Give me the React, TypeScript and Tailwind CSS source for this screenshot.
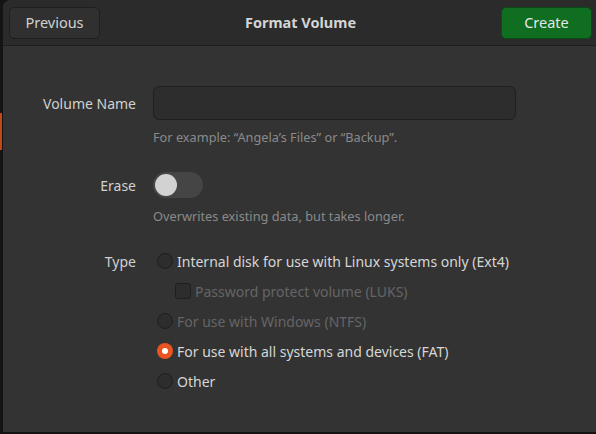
import { useState } from 'react';

const FONT = { fontFamily: '"Noto Sans", "Open Sans", sans-serif' };

type RadioProps = {
  label: string;
  checked?: boolean;
  disabled?: boolean;
  onSelect?: () => void;
};

function Radio({ label, checked, disabled, onSelect }: RadioProps) {
  return (
    <button
      type="button"
      onClick={onSelect}
      disabled={disabled}
      className="flex h-[30px] items-center gap-[4px] text-left"
    >
      {checked ? (
        <span className="flex h-[16px] w-[16px] items-center justify-center rounded-full bg-[#e95420]">
          <span className="h-[6px] w-[6px] rounded-full bg-white" />
        </span>
      ) : (
        <span className="h-[16px] w-[16px] rounded-full border border-[#1f1f1f] bg-[#2d2d2d]" />
      )}
      <span className={disabled ? 'text-[#656565]' : 'text-[#d6d6d6]'}>{label}</span>
    </button>
  );
}

export default function App() {
  const [volumeName, setVolumeName] = useState('');
  const [erase, setErase] = useState(false);
  const [type, setType] = useState('fat');

  return (
    <div className="flex h-[434px] w-[596px] bg-[#141414] text-[14px]" style={FONT}>
      {/* window edge of the app behind */}
      <div className="flex w-[3px] flex-col">
        <div className="h-[113px]" />
        <div className="h-[37px] w-[2px] bg-[#c4471a]" />
      </div>

      <div className="flex h-[432px] flex-1 flex-col overflow-hidden rounded-tl-[8px] bg-[#333333]">
        {/* Header bar */}
        <div className="flex h-[46px] items-center justify-between border-b border-[#1e1e1e] bg-[#2b2b2b] pl-[6px] pr-[4px]">
          <button className="h-[32px] w-[91px] rounded-[5px] border border-[#1f1f1f] bg-[#303030] text-[14.5px] text-[#d0d0d0]">
            Previous
          </button>
          <span className="text-[14.5px] font-bold text-[#d4d4d4]">Format Volume</span>
          <button className="h-[32px] w-[91px] rounded-[5px] border border-[#0a4a15] bg-[#0f6e1f] text-[14.5px] text-[#e6e6e6]">
            Create
          </button>
        </div>

        {/* Form */}
        <div className="grid grid-cols-[133px_1fr] gap-x-[17px] pt-[40px]">
          <label htmlFor="volume-name" className="flex h-[34px] items-center justify-end text-[#d0d0d0]">
            Volume Name
          </label>
          <div className="flex flex-col">
            <input
              id="volume-name"
              value={volumeName}
              onChange={(e) => setVolumeName(e.target.value)}
              className="h-[34px] w-[363px] rounded-[6px] border border-[#1f1f1f] bg-[#2d2d2d] px-2 text-[#d6d6d6] outline-none"
            />
            <span className="mt-[8px] text-[12.75px] text-[#8a8a8a]">
              For example: “Angela’s Files” or “Backup”.
            </span>
          </div>

          <span className="mt-[25px] flex h-[26px] items-center justify-end text-[#d0d0d0]">Erase</span>
          <div className="mt-[25px] flex flex-col">
            <button
              type="button"
              onClick={() => setErase(!erase)}
              className={`flex h-[26px] w-[50px] items-center rounded-full px-[2px] ${erase ? 'justify-end bg-[#e95420]' : 'justify-start bg-[#454545]'}`}
            >
              <span className="h-[22px] w-[22px] rounded-full bg-[#d2d2d2]" />
            </button>
            <span className="mt-[9px] text-[12.75px] text-[#8a8a8a]">
              Overwrites existing data, but takes longer.
            </span>
          </div>

          <span className="mt-[20px] flex h-[30px] items-center justify-end text-[#d0d0d0]">Type</span>
          <div className="mt-[20px] flex flex-col pl-[4px]">
            <Radio
              label="Internal disk for use with Linux systems only (Ext4)"
              checked={type === 'ext4'}
              onSelect={() => setType('ext4')}
            />
            <div className="flex h-[30px] items-center gap-[4px] pl-[18px]">
              <span className="h-[16px] w-[16px] rounded-[3px] border border-[#1f1f1f] bg-[#2d2d2d]" />
              <span className="text-[#656565]">Password protect volume (LUKS)</span>
            </div>
            <Radio label="For use with Windows (NTFS)" disabled />
            <Radio
              label="For use with all systems and devices (FAT)"
              checked={type === 'fat'}
              onSelect={() => setType('fat')}
            />
            <Radio label="Other" checked={type === 'other'} onSelect={() => setType('other')} />
          </div>
        </div>
      </div>
    </div>
  );
}
